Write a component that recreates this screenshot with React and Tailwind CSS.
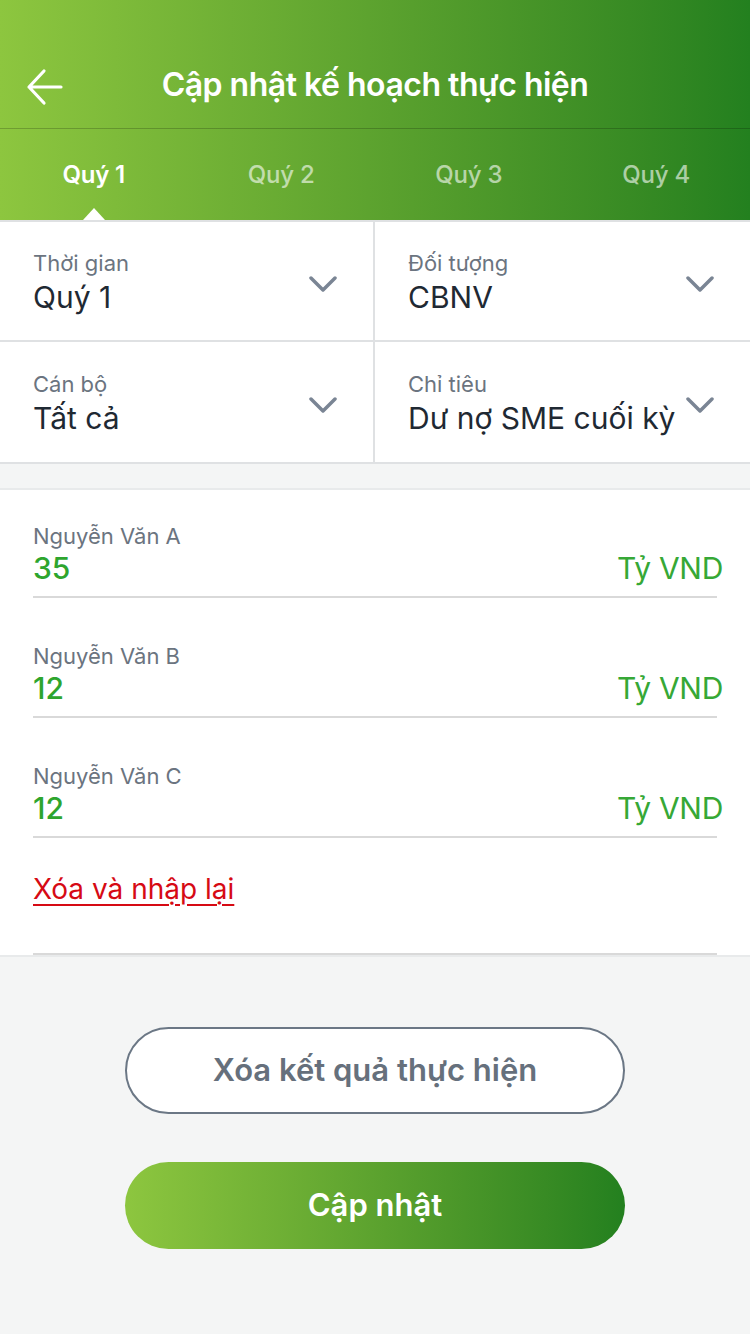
import { useState } from "react"

const filters = [
  { label: "Thời gian", value: "Quý 1" },
  { label: "Đối tượng", value: "CBNV" },
  { label: "Cán bộ", value: "Tất cả" },
  { label: "Chỉ tiêu", value: "Dư nợ SME cuối kỳ" },
]

const people = [
  { name: "Nguyễn Văn A", amount: "35" },
  { name: "Nguyễn Văn B", amount: "12" },
  { name: "Nguyễn Văn C", amount: "12" },
]

function Chevron() {
  return (
    <svg width="28" height="20" viewBox="0 0 28 20" fill="none">
      <path d="M2 3 L14 15 L26 3" stroke="#7a8594" strokeWidth="3.5" strokeLinecap="round" strokeLinejoin="round" />
    </svg>
  )
}

function App() {
  const [tab, setTab] = useState(0)
  const tabs = ["Quý 1", "Quý 2", "Quý 3", "Quý 4"]

  return (
    <div className="min-h-[1334px] bg-[#f4f5f5] font-['Inter','Noto_Sans',sans-serif]">
      <div className="bg-gradient-to-r from-[#8dc63f] to-[#23801f]">
        <div className="relative flex h-[129px] items-center justify-center border-b border-black/20 pt-[42px]">
          <button className="absolute left-[26px] top-[68px]">
            <svg width="38" height="38" viewBox="0 0 38 38" fill="none">
              <path d="M35 19 H3 M18 3 L3 19 L18 35" stroke="white" strokeWidth="3.2" strokeLinecap="round" strokeLinejoin="round" />
            </svg>
          </button>
          <h1 className="text-[32px] font-semibold tracking-[-0.5px] text-white">Cập nhật kế hoạch thực hiện</h1>
        </div>
        <div className="grid h-[91px] grid-cols-4">
          {tabs.map((t, i) => (
            <button
              key={t}
              onClick={() => setTab(i)}
              className={`relative flex items-center justify-center text-[24px] tracking-[-0.2px] ${
                tab === i ? "font-semibold text-white" : "font-medium text-white/60"
              }`}
            >
              {t}
              {tab === i && (
                <span className="absolute bottom-0 left-1/2 h-0 w-0 -translate-x-1/2 border-x-[11px] border-b-[12px] border-x-transparent border-b-white" />
              )}
            </button>
          ))}
        </div>
      </div>

      <div className="grid grid-cols-2 border-y-2 border-[#dfe1e3] bg-white">
        {filters.map((f, i) => (
          <div
            key={f.label}
            className={`flex h-[120px] items-center justify-between pl-[33px] pr-[36px] ${
              i % 2 === 0 ? "border-r-2 border-[#dfe1e3]" : ""
            } ${i < 2 ? "border-b-2 border-[#dfe1e3]" : ""}`}
          >
            <div className="flex min-w-0 flex-col pt-[4px]">
              <span className="text-[22px] leading-[28px] text-[#6b7480]">{f.label}</span>
              <span className="whitespace-nowrap text-[30px] leading-[40px] text-[#1f2933]">{f.value}</span>
            </div>
            <div className="mt-[8px] shrink-0">
              <Chevron />
            </div>
          </div>
        ))}
      </div>

      <div className="mt-[24px] border-y-2 border-[#e8eaeb] bg-white px-[33px] pt-[22px]">
        {people.map((p) => (
          <div key={p.name} className="mb-[34px] border-b-2 border-[#d9d9d9] pb-[10px] pt-[10px]">
            <div className="text-[22px] leading-[28px] text-[#6b7480]">{p.name}</div>
            <div className="-mr-[6px] flex items-center justify-between">
              <span className="text-[30px] font-medium leading-[36px] text-[#2ea52e]">{p.amount}</span>
              <span className="text-[30px] leading-[36px] tracking-[-0.3px] text-[#36a836]">Tỷ VND</span>
            </div>
          </div>
        ))}
        <a className="-mt-[4px] inline-block text-[28px] text-[#d60a14] underline decoration-2 underline-offset-[5px]">
          Xóa và nhập lại
        </a>
        <div className="mt-[43px] border-b-2 border-[#d9d9d9]" />
      </div>

      <div className="flex flex-col items-center gap-[48px] pt-[70px]">
        <button className="flex h-[87px] w-[500px] items-center justify-center rounded-full border-2 border-[#6b7785] bg-white text-[31px] font-semibold text-[#66707c]">
          Xóa kết quả thực hiện
        </button>
        <button className="flex h-[87px] w-[500px] items-center justify-center rounded-full bg-gradient-to-r from-[#8dc63f] to-[#23801f] text-[31px] font-semibold text-white">
          Cập nhật
        </button>
      </div>
    </div>
  )
}

export default App
